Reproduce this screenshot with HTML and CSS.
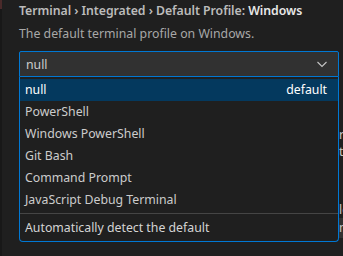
FILE: index.html
```html
<!DOCTYPE html>
<html lang="en">
<head>
    <meta charset="UTF-8">
    <meta name="viewport" content="width=device-width, initial-scale=1.0">
    <title>Default Profile</title>
    <link rel="stylesheet" href="styles.css">
</head>
<body>

    <div class="editor">
        <div class="setting">
            <div class="setting-title">
                <span class="crumb">Terminal › Integrated › Default Profile: </span><span class="key">Windows</span>
            </div>
            <div class="setting-desc">The default terminal profile on Windows.</div>

            <div class="select-wrap">
                <div class="select">
                    <span>null</span>
                    <svg class="chevron" width="16" height="16" viewBox="0 0 16 16">
                        <path d="M3.5 6 L8 10.5 L12.5 6" fill="none" stroke="#c5c5c5" stroke-width="1.1"/>
                    </svg>
                </div>

                <!-- content of the next setting, hidden under the open list -->
                <div class="under">
                    <div class="under-line l1">r</div>
                    <div class="under-line l2">t</div>
                    <div class="under-line l3">le</div>
                    <div class="under-box">m</div>
                </div>

                <ul class="options">
                    <li class="option selected"><span>null</span><span class="hint">default</span></li>
                    <li class="option">PowerShell</li>
                    <li class="option">Windows PowerShell</li>
                    <li class="option">Git Bash</li>
                    <li class="option">Command Prompt</li>
                    <li class="option">JavaScript Debug Terminal</li>
                    <li class="sep"></li>
                    <li class="option auto">Automatically detect the default</li>
                </ul>
            </div>
        </div>
    </div>

</body>
</html>
```

FILE: styles.css
```css
/* General styling */
body {
    margin: 0;
    padding: 0;
    background-color: #1f1f1f;
    font-family: 'Noto Sans', 'Open Sans', sans-serif;
    font-size: 12.3px;
    color: #cccccc;
    overflow: hidden;
}

.editor {
    height: 256px;
    border-left: 2px solid #181818;
    position: relative;
}

.editor::before {
    content: "";
    position: absolute;
    left: -2px;
    top: 0;
    width: 2px;
    height: 9px;
    background-color: #4a2a2a;
}

.setting {
    padding: 1px 0 0 17px;
}

.setting-title {
    line-height: 20px;
    font-weight: 600;
    letter-spacing: -0.05px;
    white-space: nowrap;
}

.setting-title .crumb {
    color: #bbbbbb;
}

.setting-title .key {
    color: #e7e7e7;
}

.setting-desc {
    margin-top: 3px;
    line-height: 20px;
    color: #a8a8a8;
    white-space: nowrap;
}

.select-wrap {
    position: relative;
    margin-top: 7px;
    width: 320px;
}

.select {
    height: 24px;
    border: 1px solid #0078d4;
    border-radius: 2px 2px 0 0;
    background-color: #313131;
    color: #cccccc;
    display: flex;
    align-items: center;
    justify-content: space-between;
    padding: 0 8px 0 6px;
}

.chevron {
    display: block;
}

/* text of the next setting, seen at the right edge */
.under {
    padding-top: 50px;
    color: #c8c8c8;
    display: flex;
    flex-direction: column;
    align-items: flex-end;
    width: 326px;
}

.under-line {
    line-height: 16px;
    width: 6px;
    overflow: hidden;
}

.under-line.l2 {
    margin-top: 1px;
}

.under-line.l3 {
    margin-top: 42px;
}

.under-box {
    width: 6px;
    height: 20px;
    line-height: 20px;
    background-color: #313131;
    overflow: hidden;
}

.options {
    position: absolute;
    left: 0;
    top: 26px;
    width: 320px;
    box-sizing: border-box;
    margin: 0;
    padding: 2px 0 2px 0;
    list-style: none;
    background-color: #1f1f1f;
    border: 1px solid #0078d4;
    border-top: none;
    border-radius: 0 0 4px 4px;
}

.option {
    height: 22px;
    line-height: 22px;
    padding: 0 11px 0 5px;
    display: flex;
    justify-content: space-between;
    white-space: nowrap;
}

.option.selected {
    background-color: #04395e;
    color: #ffffff;
}

.sep {
    height: 1px;
    margin: 2px 0 3px 0;
    background-color: #454545;
}

.option.auto {
    color: #d4d4d4;
}
```
